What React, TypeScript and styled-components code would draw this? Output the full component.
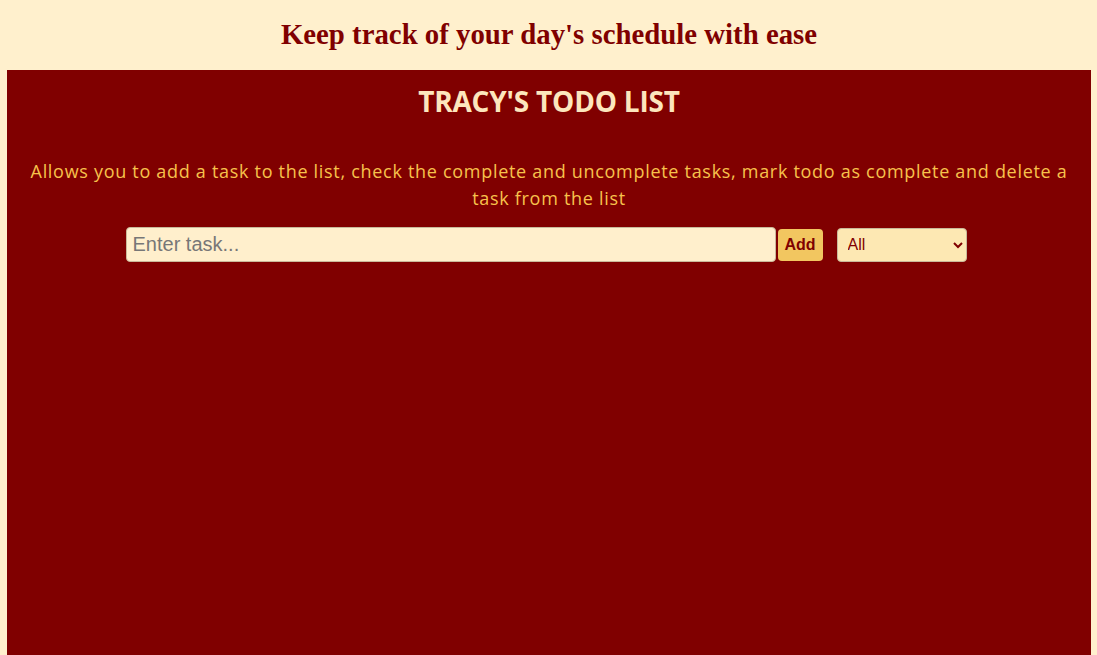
import React from "react";
import styled, { createGlobalStyle } from "styled-components";

const Global = createGlobalStyle`
  html, body { margin: 0; padding: 0; }
  body {
    background: #fff0cd;
    margin: 0 6px 0 7px;
    font-family: "Open Sans", "Noto Sans", sans-serif;
  }
`;

const Tagline = styled.h1`
  margin: 0;
  height: 70px;
  display: flex;
  align-items: center;
  justify-content: center;
  padding-bottom: 2px;
  box-sizing: border-box;
  font-family: "Liberation Serif", "Times New Roman", serif;
  font-size: 28.8px;
  font-weight: 700;
  color: #800000;
`;

const Main = styled.main`
  background: #800000;
  min-height: 585px;
  display: flex;
  flex-direction: column;
  align-items: center;
  padding: 11px 20px 0;
  box-sizing: border-box;
`;

const Title = styled.h2`
  margin: 0;
  font-family: "Open Sans", sans-serif;
  font-size: 28px;
  font-weight: 700;
  letter-spacing: -0.2px;
  color: #fde6bd;
  line-height: 40px;
`;

const Description = styled.p`
  margin: 37px 0 0;
  font-size: 18px;
  letter-spacing: 0.7px;
  line-height: 27px;
  color: #f7c24c;
  text-align: center;
  max-width: 1045px;
`;

const Controls = styled.div`
  display: flex;
  align-items: center;
  margin: 15px 6px 0 0;
`;

const TaskInput = styled.input`
  width: 650px;
  height: 35px;
  box-sizing: border-box;
  border: 1px solid #c9b99a;
  border-radius: 4px;
  background: #ffefcc;
  padding: 0 6px;
  font-family: "Liberation Sans", Arial, sans-serif;
  font-size: 20px;
  color: #333;
  outline: none;
  &::placeholder { color: #777; }
`;

const AddButton = styled.button`
  margin-left: 2px;
  width: 45px;
  height: 32px;
  border: none;
  border-radius: 4px;
  background: #f2c660;
  color: #800000;
  font-family: "Liberation Sans", Arial, sans-serif;
  font-size: 16px;
  font-weight: 700;
  padding: 0;
`;

const Filter = styled.select`
  margin-left: 14px;
  width: 130px;
  height: 34px;
  border: 1px solid #c9b99a;
  border-radius: 4px;
  background: #fde8b3;
  color: #800000;
  font-family: "Liberation Sans", Arial, sans-serif;
  font-size: 16px;
  padding: 0 6px;
`;

export default function App() {
  return (
    <>
      <Global />
      <Tagline>Keep track of your day's schedule with ease</Tagline>
      <Main>
        <Title>TRACY'S TODO LIST</Title>
        <Description>
          Allows you to add a task to the list, check the complete and uncomplete tasks, mark todo as complete and delete a task from the list
        </Description>
        <Controls>
          <TaskInput placeholder="Enter task..." />
          <AddButton>Add</AddButton>
          <Filter defaultValue="All">
            <option>All</option>
            <option>Complete</option>
            <option>Uncomplete</option>
          </Filter>
        </Controls>
      </Main>
    </>
  );
}
